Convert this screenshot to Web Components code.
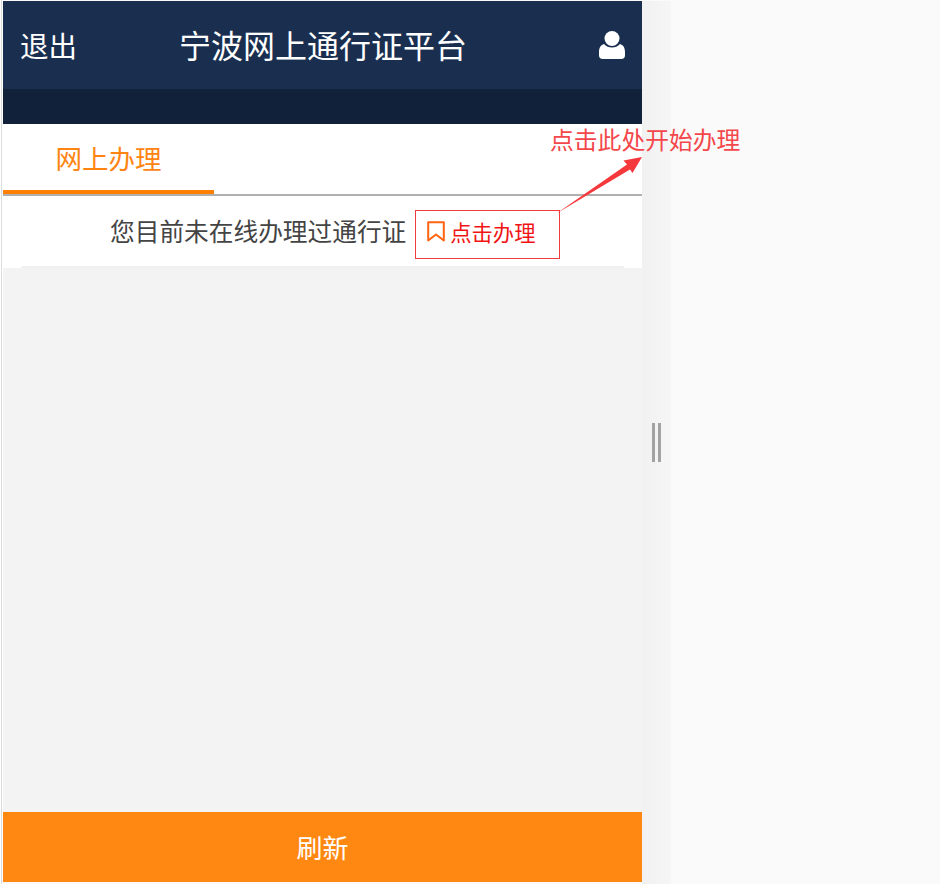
<!DOCTYPE html>
<html lang="zh"><head><meta charset="utf-8"><title>宁波网上通行证平台</title>
<style>
html,body{margin:0;height:884px;overflow:hidden;background:#fff;font-family:"Liberation Sans","Noto Sans CJK SC",sans-serif}
</style></head><body>
<np-app>
  <np-header slot="header" title="宁波网上通行证平台" action="退出"></np-header>
  <np-tabs slot="tabs" label="网上办理"></np-tabs>
  <np-notice slot="notice" text="您目前未在线办理过通行证" action="点击办理"></np-notice>
  <np-footer slot="footer" label="刷新"></np-footer>
  <np-callout slot="overlay" text="点击此处开始办理"></np-callout>
</np-app>
<script>
const F='"Liberation Sans","Noto Sans CJK SC",sans-serif';
function def(name,render){customElements.define(name,class extends HTMLElement{connectedCallback(){if(this.shadowRoot)return;this.attachShadow({mode:'open'}).innerHTML=render(this)}})}
def('np-app',()=>`<style>
:host{display:flex;width:940px;height:884px;box-sizing:border-box;position:relative;background:#fafafa}
.edge{width:3px;background:linear-gradient(90deg,#fff 0 1px,#dcdcdc 1px 2px,#fff 2px)}
.phone{width:639px;display:flex;flex-direction:column;background:#f3f3f3;margin:1px 0 2px}
.grow{flex:1}
.handle{width:29px;background:linear-gradient(90deg,#f1f1f1,#f6f6f6);margin-top:1px;display:flex;align-items:center;justify-content:center;gap:3px}
.handle i{width:3px;height:39px;background:#a3a3a3;display:block}
.rest{flex:1}
</style>
<div class="edge"></div>
<div class="phone"><slot name="header"></slot><slot name="tabs"></slot><slot name="notice"></slot><div class="grow"></div><slot name="footer"></slot></div>
<div class="handle"><i></i><i></i></div><div class="rest"></div>
<slot name="overlay"></slot>`);
def('np-header',h=>`<style>
:host{display:block;background:#11213a;padding-bottom:35px;font-family:${F}}
.bar{height:88px;box-sizing:border-box;padding:0 17px 2px;background:#1a2f50;color:#fff;display:flex;align-items:center}
.a{font-size:28.5px;width:57px;white-space:nowrap}.t{font-size:32px;margin-left:102px;white-space:nowrap}
svg{display:block;margin-left:auto;margin-top:2px}
</style><div class="bar"><span class="a">${h.getAttribute('action')}</span><span class="t">${h.getAttribute('title')}</span>
<svg width="26" height="28" viewBox="0 0 26 28"><circle cx="13" cy="7.5" r="7.5" fill="#fff"/><path d="M5 13C7 15.500 10 16.500 13 16.500S19 15.500 21 13C24 13.800 26 16.500 26 21V24.500C26 26.500 24.500 28 22.500 28H3.500C1.500 28 0 26.500 0 24.500V21C0 16.500 2 13.800 5 13Z" fill="#fff"/></svg></div>`);
def('np-tabs',h=>`<style>
:host{display:block;background:#fff;height:72px;box-sizing:border-box;border-bottom:2px solid #b0b0b0;font-family:${F}}
.tab{width:211px;height:70px;box-sizing:border-box;border-bottom:4px solid #ff8000;color:#ff8412;font-size:26.5px;display:flex;align-items:center;justify-content:center}
</style><div class="tab">${h.getAttribute('label')}</div>`);
def('np-notice',h=>`<style>
:host{display:block;background:#fff;height:72px;font-family:${F}}
.row{margin:0 18px;height:72px;border-bottom:2px solid #f0f0f0;box-sizing:border-box;display:flex;align-items:center;padding:0 0 3px 89px;gap:9px}
.t{font-size:24.7px;color:#444;white-space:nowrap}
.b{width:145px;height:49px;box-sizing:border-box;border:1px solid rgb(240,60,60);display:flex;align-items:center;gap:5px;padding:0 0 7px 11px;color:#f01414;font-size:21.3px;margin-top:10px;white-space:nowrap}
svg{display:block}
</style><div class="row"><span class="t">${h.getAttribute('text')}</span><span class="b"><svg width="18" height="21" viewBox="0 0 18 21"><path d="M1.200 1.200H16.800V19.500L9 13.500 1.200 19.500Z" fill="none" stroke="#ff6412" stroke-width="2" stroke-linejoin="round"/></svg>${h.getAttribute('action')}</span></div>`);
def('np-footer',h=>`<style>
:host{display:flex;height:70px;box-sizing:border-box;padding-bottom:2px;background:#ff8813;color:#fff;font-size:26px;align-items:center;justify-content:center;font-family:${F}}
</style>${h.getAttribute('label')}`);
def('np-callout',h=>`<style>
:host{position:absolute;left:0;top:0;display:block;font-family:${F}}
.t{position:absolute;left:550px;top:124px;font-size:23.8px;line-height:34px;color:#f4474b;white-space:nowrap}
svg{position:absolute;left:550px;top:150px}
</style><span class="t">${h.getAttribute('text')}</span>
<svg width="100" height="70" viewBox="550 150 100 70"><path d="M556.500 213.500L627 164.500 623.500 160.500 642 157 632.500 173 630 169.500Z" fill="#f5383c"/></svg>`);
</script></body></html>
